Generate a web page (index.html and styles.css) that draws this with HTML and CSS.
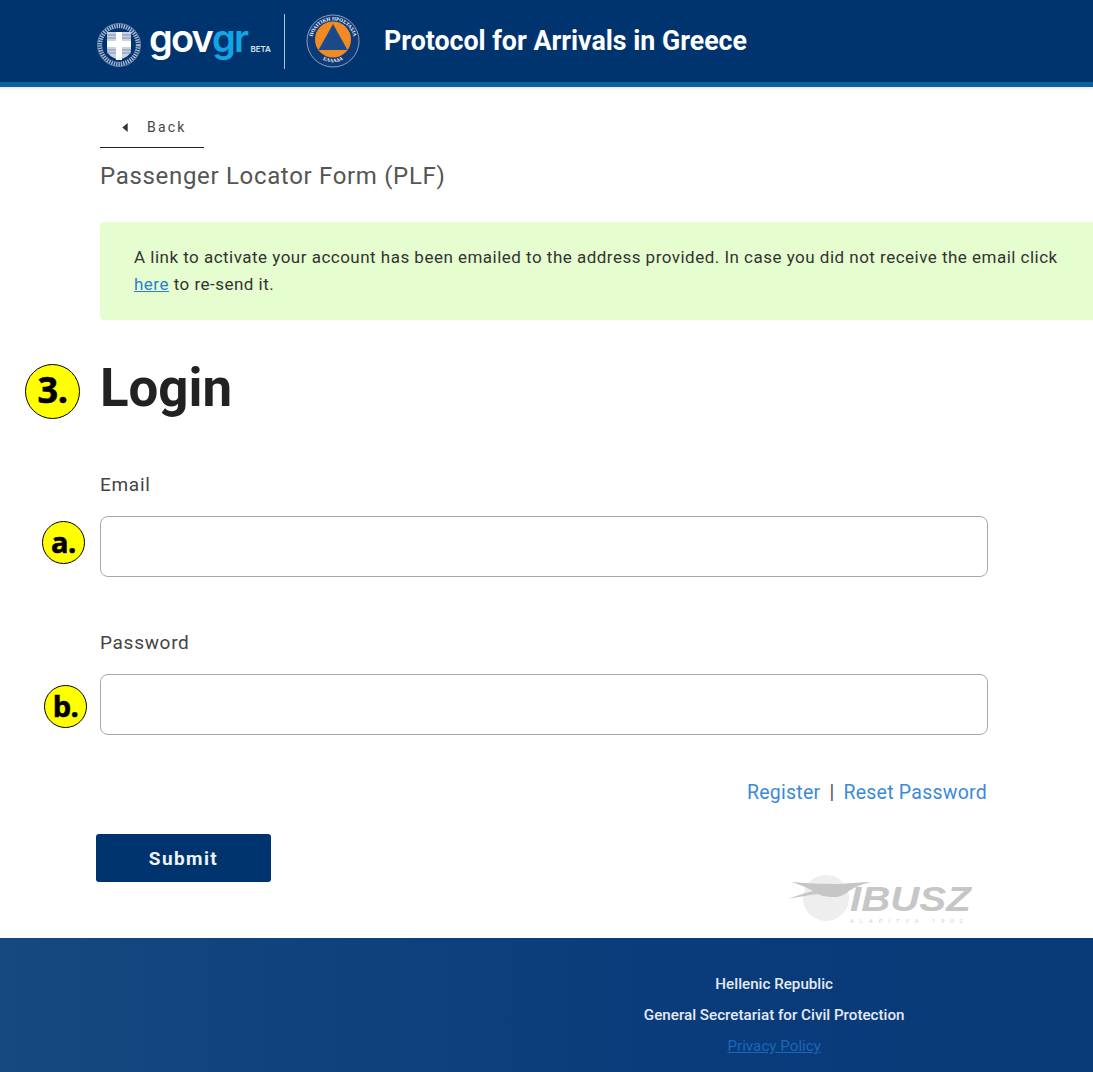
FILE: index.html
```html
<!DOCTYPE html>
<html lang="en">
<head>
    <meta charset="UTF-8">
    <meta name="viewport" content="width=device-width, initial-scale=1.0">
    <title>Protocol for Arrivals in Greece</title>
    <link rel="stylesheet" href="styles.css">
</head>
<body>
    <header class="site-header">
        <svg class="arms" viewBox="0 0 44 44" width="44" height="44">
            <circle cx="22" cy="22" r="19" fill="none" stroke="#a9b8cf" stroke-width="4.4" stroke-dasharray="1.4 1"/>
            <circle cx="22" cy="22" r="21.5" fill="none" stroke="#7f95b6" stroke-width="0.8"/>
            <path d="M10 9h24v18c0 5-6 8-12 10-6-2-12-5-12-10z" fill="#c9d2e0"/>
            <path d="M19 9h6v9h9v6h-9v13h-6V24h-9v-6h9z" fill="#fff"/>
            <path d="M10 12h9M10 15h9M25 12h9M25 15h9M10 27h9M10 30h9M25 27h9M25 30h9" stroke="#7f92b0" stroke-width="1"/>
        </svg>
        <div class="gov-logo"><span>gov</span><span class="gov-logo-gr">gr</span><small>BETA</small></div>
        <div class="header-divider"></div>
        <svg class="civil-logo" viewBox="0 0 54 54" width="54" height="54">
            <defs><path id="ring-top" d="M6.5 33A21.200 21.200 0 1 1 47.500 33"/><path id="ring-bottom" d="M15 44.500A21.500 21.500 0 0 0 39 44.500"/></defs>
            <circle cx="27" cy="27" r="27" fill="#0d3a78"/>
            <circle cx="27" cy="27" r="26" fill="none" stroke="#d6deea" stroke-width="0.6"/>
            <circle cx="27" cy="25.5" r="18" fill="#f08a24"/>
            <path d="M27 10L41.500 36H12.500z" fill="#1b4a8a"/>
            <text class="civil-text"><textPath href="#ring-top" startOffset="50%" text-anchor="middle">ΠΟΛΙΤΙΚΗ ΠΡΟΣΤΑΣΙΑ</textPath></text>
            <text class="civil-text"><textPath href="#ring-bottom" startOffset="50%" text-anchor="middle">ΕΛΛΑΔΑ</textPath></text>
        </svg>
        <div class="header-title">Protocol for Arrivals in Greece</div>
    </header>

    <main class="content">
        <a class="back-link" href="#">
            <svg viewBox="0 0 6 10" width="6" height="9"><path d="M6 0v10L0 5z" fill="#333"/></svg>
            <span>Back</span>
        </a>
        <div class="form-title">Passenger Locator Form (PLF)</div>

        <div class="alert">
            A link to activate your account has been emailed to the address provided. In case you did not receive the email click <a href="#">here</a> to re-send it.
        </div>

        <h1 class="login-title"><span class="badge badge-big">3.</span>Login</h1>

        <div class="field">
            <label for="email">Email</label>
            <div class="input-wrap">
                <span class="badge badge-a">a.</span>
                <input id="email" type="text">
            </div>
        </div>
        <div class="field">
            <label for="password">Password</label>
            <div class="input-wrap">
                <span class="badge badge-b">b.</span>
                <input id="password" type="password">
            </div>
        </div>

        <div class="form-links"><a href="#">Register</a><span>|</span><a href="#">Reset Password</a></div>

        <div class="form-bottom">
            <button class="submit" type="button">Submit</button>
            <div class="ibusz">
                <svg viewBox="0 0 90 50" width="90" height="50">
                    <circle cx="38" cy="23" r="23" fill="#eeeeee"/>
                    <path d="M3 7C18 8 32 9 46 9 58 9 72 7 83 7 74 9 67 12 61 16 56 20 52 22 46 22 40 22 36 22 30 19 20 20 10 22 0 24 8 21 16 18 25 16 18 12 10 9 3 7z" fill="#c6c6c6"/>
                </svg>
                <div class="ibusz-text">
                    <div class="ibusz-name">IBUSZ</div>
                    <div class="ibusz-sub">ALAPÍTVA 1902</div>
                </div>
            </div>
        </div>
    </main>

    <footer class="site-footer">
        <div></div>
        <div class="footer-text">
            <div>Hellenic Republic</div>
            <div>General Secretariat for Civil Protection</div>
            <a href="#">Privacy Policy</a>
        </div>
    </footer>
</body>
</html>
```

FILE: styles.css
```css
* {
    box-sizing: border-box;
}
html, body {
    margin: 0;
    padding: 0;
}
body {
    font-family: Roboto, "Liberation Sans", sans-serif;
    background-color: #ffffff;
    color: #333333;
    overflow-x: hidden;
}

/* header */
.site-header {
    height: 87px;
    padding-left: 97px;
    display: flex;
    align-items: center;
    background-color: #00346f;
    border-bottom: 5px solid #0e5f9e;
    box-shadow: 0 1px 3px rgba(0, 0, 0, 0.12);
}
.arms {
    margin-top: 8px;
    flex: none;
}
.gov-logo {
    margin-left: 8px;
    display: flex;
    align-items: baseline;
    font-family: Inter, sans-serif;
    font-weight: 600;
    font-size: 38px;
    letter-spacing: -1.8px;
    color: #ffffff;
    width: 126px;
    margin-top: -6px;
}
.gov-logo-gr {
    color: #12a5e6;
}
.gov-logo small {
    margin-left: 3px;
    font-size: 8px;
    font-weight: 600;
    letter-spacing: 0;
    color: #dbe4ef;
}
.header-divider {
    width: 1px;
    height: 55px;
    margin-left: 9px;
    background-color: #b4c0d2;
}
.civil-logo {
    margin-left: 21px;
    flex: none;
}
.civil-text {
    font-family: "Liberation Serif", serif;
    font-size: 5px;
    font-weight: bold;
    fill: #ffffff;
}
.header-title {
    margin-left: 24px;
    font-size: 26.75px;
    font-weight: 700;
    color: #ffffff;
}

/* main form */
.content {
    padding-left: 100px;
}
.back-link {
    width: 104px;
    height: 39px;
    margin-top: 22px;
    padding: 0 0 2px 22px;
    display: flex;
    align-items: center;
    gap: 19px;
    border-bottom: 1px solid #222222;
    font-size: 14px;
    letter-spacing: 2.2px;
    color: #444444;
    text-decoration: none;
}
.form-title {
    margin-top: 13px;
    font-size: 24px;
    line-height: 30px;
    letter-spacing: 0.68px;
    color: #555555;
}
.alert {
    width: 1000px;
    margin-top: 31px;
    padding: 22px 30px 22px 34px;
    background-color: #e6fdd0;
    border-radius: 4px;
    font-size: 17px;
    line-height: 27px;
    letter-spacing: 0.484px;
    color: #333333;
}
.alert a {
    color: #2b7fd0;
}
.login-title {
    position: relative;
    margin: 36px 0 0;
    font-size: 52.8px;
    line-height: 64px;
    font-weight: 700;
    color: #222222;
}
.badge {
    position: absolute;
    padding-bottom: 3px;
    display: flex;
    align-items: center;
    justify-content: center;
    background-color: #ffff00;
    border: 1px solid #000000;
    border-radius: 50%;
    font-family: "Open Sans", sans-serif;
    font-weight: 700;
    color: #000000;
    letter-spacing: -0.5px;
    -webkit-text-stroke: 0.6px #000000;
}
.badge-big {
    left: -75px;
    top: 8px;
    width: 55px;
    height: 55px;
    font-size: 36px;
}
.badge-a {
    left: -58px;
    top: 5px;
    width: 43px;
    height: 43px;
    font-size: 29px;
}
.badge-b {
    left: -56px;
    top: 11px;
    width: 43px;
    height: 43px;
    font-size: 29px;
}
.login-title + .field {
    margin-top: 53px;
}
.field + .field {
    margin-top: 54px;
}
.field label {
    display: block;
    font-size: 19px;
    line-height: 24px;
    letter-spacing: 0.7px;
    color: #444444;
}
.input-wrap {
    position: relative;
    margin-top: 19px;
    width: 888px;
}
.input-wrap input {
    display: block;
    width: 100%;
    height: 61px;
    padding: 0 16px;
    border: 1px solid #a8a8a8;
    border-radius: 8px;
    background-color: #ffffff;
    font-size: 18px;
}
.form-links {
    width: 887px;
    margin-top: 45px;
    display: flex;
    justify-content: flex-end;
    gap: 9px;
    font-size: 19.5px;
    line-height: 26px;
    letter-spacing: 0.25px;
    color: #555555;
}
.form-links a {
    color: #3a8ad8;
    text-decoration: none;
}
.form-bottom {
    width: 875px;
    margin-left: -4px;
    display: flex;
    justify-content: space-between;
    align-items: flex-start;
}
.submit {
    width: 175px;
    height: 48px;
    margin-top: 28px;
    border: none;
    border-radius: 3px;
    background-color: #00346f;
    color: #eef2f7;
    font-family: Roboto, sans-serif;
    font-size: 19px;
    font-weight: 700;
    letter-spacing: 1.4px;
}
.ibusz {
    position: relative;
    width: 183px;
    height: 50px;
    margin-top: 69px;
    flex: none;
}
.ibusz svg {
    display: block;
}
.ibusz-text {
    position: absolute;
    left: 62px;
    top: 7px;
    width: 122px;
}
.ibusz-name {
    font-family: "Liberation Sans", sans-serif;
    font-style: italic;
    font-weight: 700;
    font-size: 35px;
    line-height: 34px;
    transform: scaleX(1.15);
    transform-origin: left center;
    color: #c6c6c6;
}
.ibusz-sub {
    margin-top: 1px;
    font-size: 6px;
    line-height: 8px;
    letter-spacing: 5.95px;
    font-style: italic;
    white-space: nowrap;
    color: #d2d2d2;
}

/* footer */
.site-footer {
    height: 134px;
    margin-top: 13px;
    display: grid;
    grid-template-columns: 5fr 7fr;
    background: linear-gradient(90deg, #15497f 0%, #0a3c7b 60%, #083a78 100%);
}
.footer-text {
    padding-top: 31px;
    text-align: center;
    font-size: 15.2px;
    line-height: 31px;
    font-weight: 500;
    color: #e4eaf3;
}
.footer-text a {
    font-weight: 400;
    color: #1d66b8;
}
```
